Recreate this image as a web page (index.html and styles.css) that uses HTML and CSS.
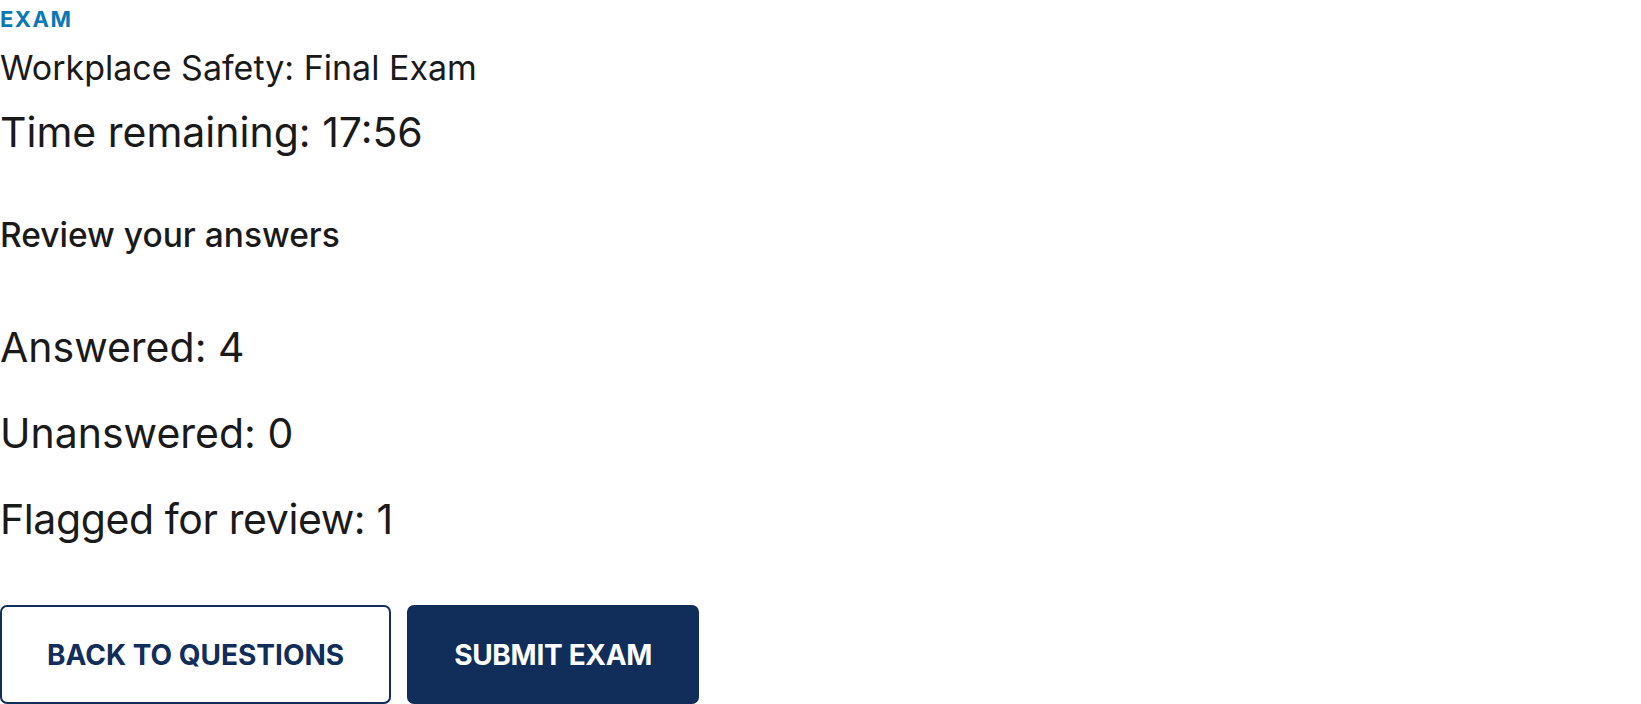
FILE: index.html
```html
<!DOCTYPE html>
<html lang="en">
<head>
<meta charset="utf-8">
<title>Workplace Safety: Final Exam</title>
<link rel="stylesheet" href="styles.css">
</head>
<body>
<main class="exam">
  <div class="overline">EXAM</div>
  <h1 class="title">Workplace Safety: Final Exam</h1>
  <div class="timer">Time remaining: 17:56</div>
  <h2 class="review">Review your answers</h2>
  <ul class="stats">
    <li>Answered: 4</li>
    <li>Unanswered: 0</li>
    <li class="flagged">Flagged for review: 1</li>
  </ul>
  <div class="actions">
    <button class="btn btn-outline">BACK TO QUESTIONS</button>
    <button class="btn btn-solid">SUBMIT EXAM</button>
  </div>
</main>
</body>
</html>
```

FILE: styles.css
```css
html, body {
  margin: 0;
  padding: 0;
  background: #ffffff;
}
body {
  font-family: Inter, "Noto Sans", "Liberation Sans", sans-serif;
  color: #1a1a1a;
}
.exam {
  display: flex;
  flex-direction: column;
  align-items: flex-start;
}
.overline {
  margin-top: 4px;
  font-size: 22px;
  font-weight: 700;
  letter-spacing: 1.5px;
  color: #0b78b5;
  line-height: 30px;
}
.title {
  margin: 12px 0 0;
  font-size: 34px;
  font-weight: 400;
  line-height: 44px;
}
.timer {
  margin-top: 14px;
  font-size: 41px;
  line-height: 56px;
}
.review {
  margin: 53px 0 0;
  font-size: 33.5px;
  font-weight: 500;
  line-height: 44px;
}
.stats {
  list-style: none;
  margin: 62px 0 0;
  padding: 0;
  display: flex;
  flex-direction: column;
  gap: 30px;
  font-size: 41px;
  line-height: 56px;
}
.stats .flagged {
  letter-spacing: -0.4px;
}
.actions {
  margin-top: 58px;
  display: flex;
  gap: 16px;
}
.btn {
  box-sizing: border-box;
  font-family: Inter, "Noto Sans", "Liberation Sans", sans-serif;
  font-size: 28px;
  font-weight: 700;
  height: 99px;
  padding: 0 45px;
  border-radius: 7px;
  border: 2px solid #112d5a;
  cursor: pointer;
}
.btn-outline {
  background: #ffffff;
  color: #112d5a;
}
.btn-solid {
  background: #112d5a;
  color: #ffffff;
  letter-spacing: -0.3px;
}
```
